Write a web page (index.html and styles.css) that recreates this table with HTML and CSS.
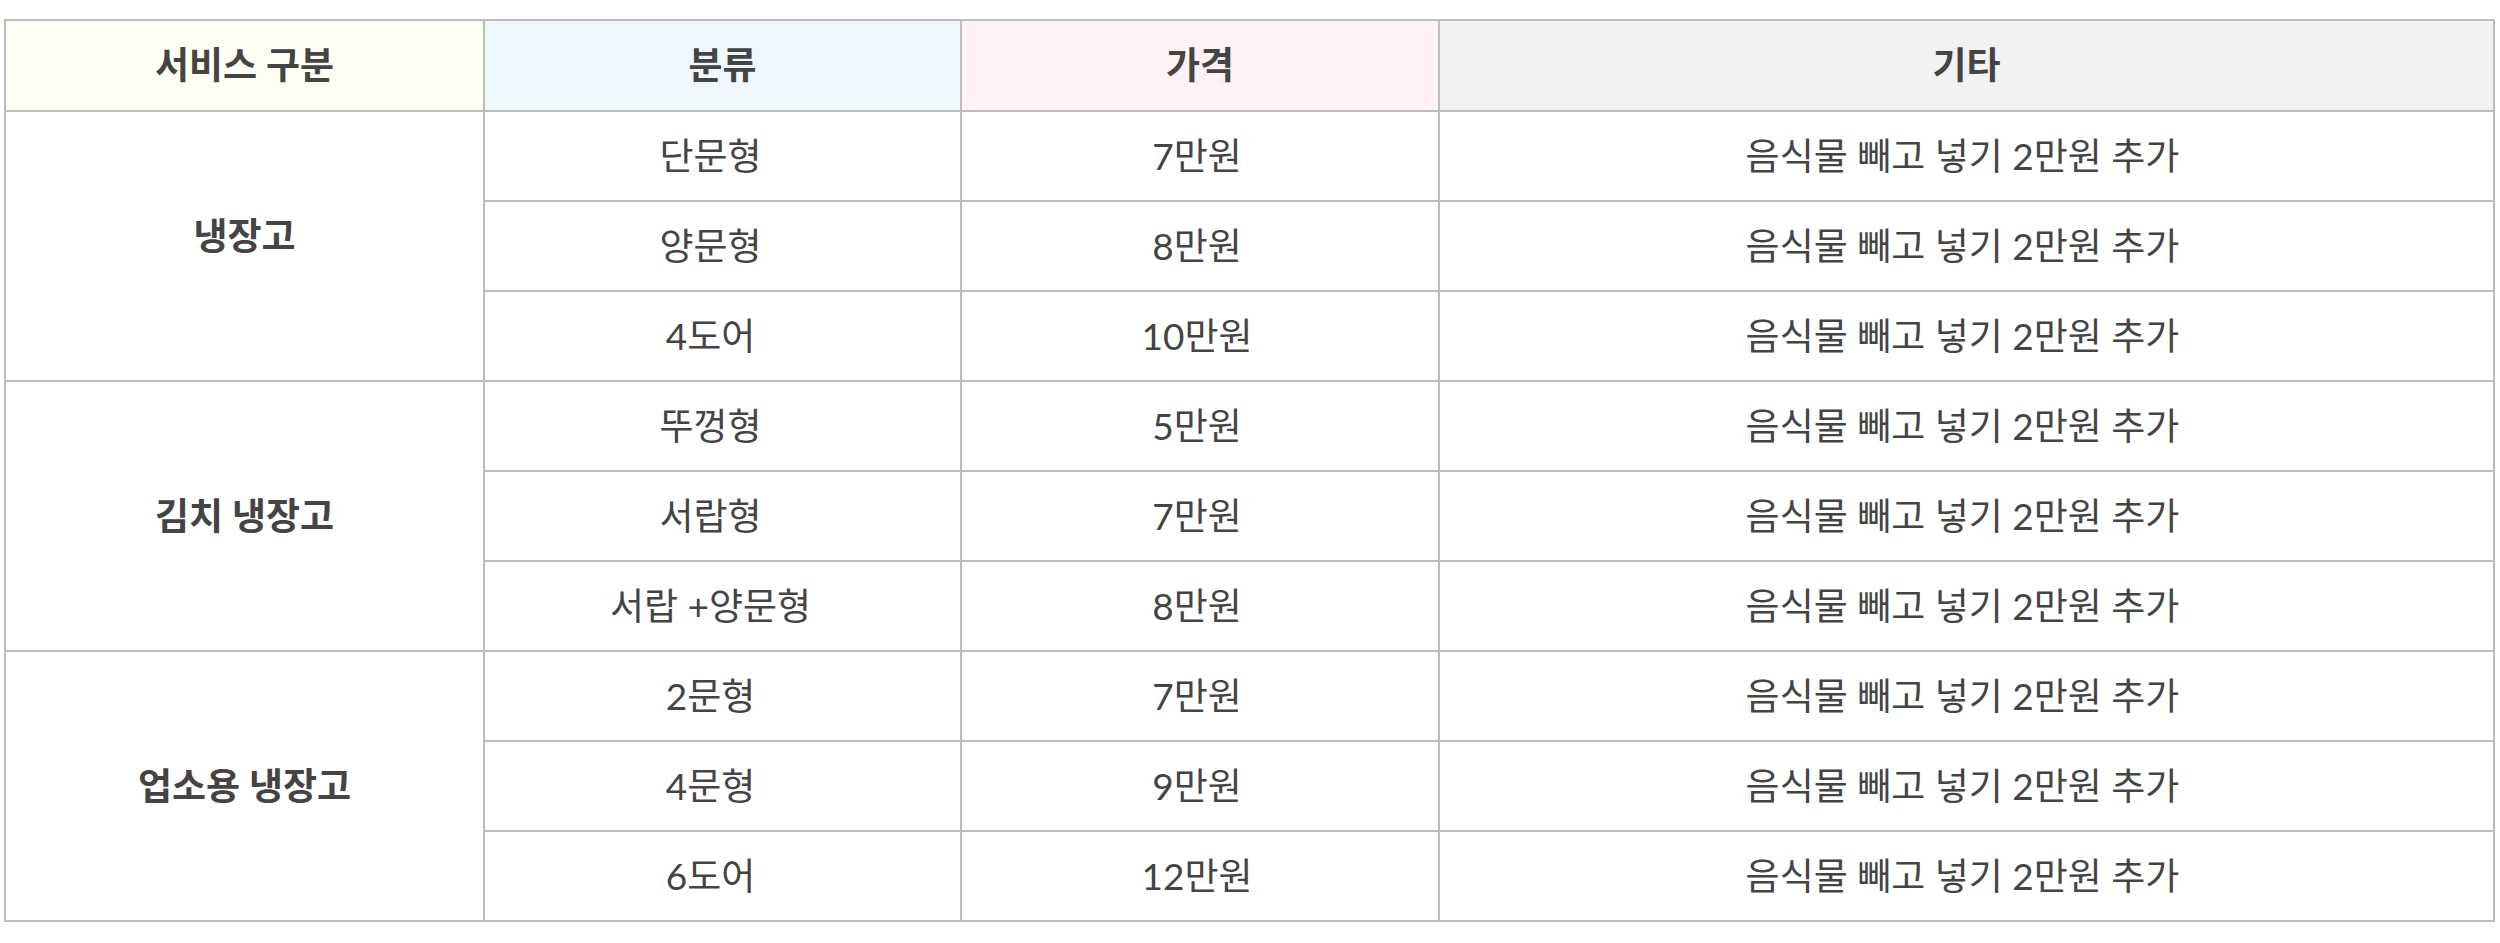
FILE: index.html
```html
<!DOCTYPE html>
<html lang="ko">
<head>
<meta charset="utf-8">
<link rel="stylesheet" href="styles.css">
</head>
<body>
<div class="wrap">
<table class="price">
  <colgroup>
    <col class="c1"><col class="c2"><col class="c3"><col class="c4">
  </colgroup>
  <thead>
    <tr>
      <th class="h-yellow">서비스 구분</th>
      <th class="h-blue">분류</th>
      <th class="h-pink">가격</th>
      <th class="h-gray">기타</th>
    </tr>
  </thead>
  <tbody>
    <tr><td class="group group-raised" rowspan="3">냉장고</td><td class="kind">단문형</td><td class="cost">7만원</td><td class="note">음식물 빼고 넣기 2만원 추가</td></tr>
    <tr><td class="kind">양문형</td><td class="cost">8만원</td><td class="note">음식물 빼고 넣기 2만원 추가</td></tr>
    <tr><td class="kind">4도어</td><td class="cost">10만원</td><td class="note">음식물 빼고 넣기 2만원 추가</td></tr>
    <tr><td class="group" rowspan="3">김치 냉장고</td><td class="kind">뚜껑형</td><td class="cost">5만원</td><td class="note">음식물 빼고 넣기 2만원 추가</td></tr>
    <tr><td class="kind">서랍형</td><td class="cost">7만원</td><td class="note">음식물 빼고 넣기 2만원 추가</td></tr>
    <tr><td class="kind">서랍 +양문형</td><td class="cost">8만원</td><td class="note">음식물 빼고 넣기 2만원 추가</td></tr>
    <tr><td class="group" rowspan="3">업소용 냉장고</td><td class="kind">2문형</td><td class="cost">7만원</td><td class="note">음식물 빼고 넣기 2만원 추가</td></tr>
    <tr><td class="kind">4문형</td><td class="cost">9만원</td><td class="note">음식물 빼고 넣기 2만원 추가</td></tr>
    <tr><td class="kind">6도어</td><td class="cost">12만원</td><td class="note">음식물 빼고 넣기 2만원 추가</td></tr>
  </tbody>
</table>
</div>
</body>
</html>
```

FILE: styles.css
```css
html, body {
  margin: 0;
  padding: 0;
  background: #ffffff;
}
.wrap {
  padding: 19px 0 0 4px;
}
.price {
  width: 2489px;
  border-collapse: collapse;
  table-layout: fixed;
  font-family: "Lato", "Noto Sans CJK KR", sans-serif;
  font-size: 37px;
  color: #444444;
}
.c1 { width: 479px; }
.c2 { width: 477px; }
.c3 { width: 478px; }
.c4 { width: 1055px; }
.price th,
.price td {
  border: 2px solid #bdbdbd;
  text-align: center;
  vertical-align: middle;
  padding: 0;
  height: 88px;
  line-height: 1.2;
}
.price th {
  font-weight: 700;
  height: 89px;
}
.h-yellow { background: #fffef2; }
.h-blue { background: #eef7fe; }
.h-pink { background: #fff1f5; }
.h-gray { background: #f2f2f2; }
.price td.group {
  font-weight: 700;
}
.price td.group-raised {
  padding-bottom: 20px;
}
.price td.kind {
  padding-right: 24px;
}
.price td.cost {
  padding-right: 6px;
}
.price td.note {
  padding-right: 8px;
}
```
